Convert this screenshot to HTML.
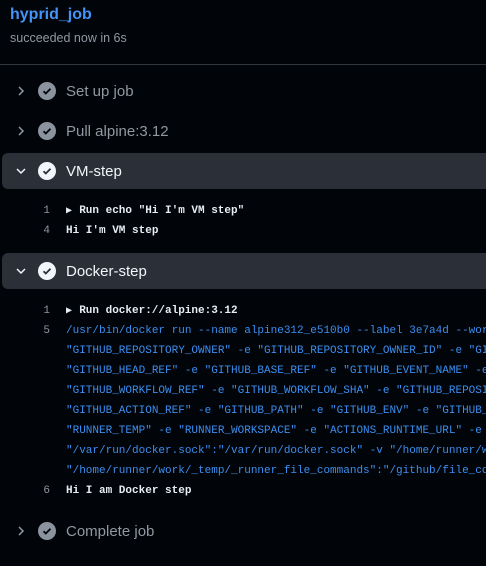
<!DOCTYPE html>
<html style="overflow:hidden"><head><meta charset="utf-8"><style>
body{margin:0;width:486px;height:566px;background:#010409;overflow:hidden;font-family:"Liberation Sans",sans-serif;position:relative}
.t{position:absolute;white-space:nowrap}
.title{left:10px;top:6px;font-size:16px;font-weight:bold;color:#4493f8}
.sub{left:10px;top:31px;font-size:12.5px;color:#9198a1}
.div{position:absolute;left:0;right:0;top:64px;height:1px;background:#30363d}
.step{position:absolute;left:2px;right:0;height:36px}
.step.open{background:#2b3038;border-radius:6px 0 0 6px}
.chev{position:absolute;left:13px;top:12px}
.chk{position:absolute;left:36px;top:9px;width:18px;height:18px;border-radius:50%;background:#8b949e}
.open .chk{background:#f0f6fc}
.chk svg{position:absolute;left:3px;top:3px}
.lbl{position:absolute;left:64px;top:10px;font-size:15px;color:#9198a1}
.open .lbl{color:#f0f6fc}
.code{font-family:"Liberation Mono",monospace;font-size:11px;}
.ln{position:absolute;left:30px;width:20px;text-align:right;color:#9198a1}
.c{position:absolute;left:66px;right:0;overflow:hidden;color:#e6edf3;font-weight:bold}
.b{color:#3b8ff0;font-weight:normal}
.tri{display:inline-block;width:13.2px;font-size:10px;}
</style></head><body>
<div class="t title">hyprid_job</div>
<div class="t sub">succeeded now in 6s</div>
<div class="div"></div>

<div class="step" style="top:73px"><svg class="chev" width="12" height="12" viewBox="0 0 12 12"><path d="M4 2l4 4-4 4" stroke="#9198a1" stroke-width="1.5" fill="none"/></svg><div class="chk"><svg width="12" height="12" viewBox="0 0 12 12"><path d="M2.5 6.2l2.3 2.3 4.7-4.8" stroke="#010409" stroke-width="1.8" fill="none"/></svg></div><div class="lbl">Set up job</div></div>
<div class="step" style="top:113px"><svg class="chev" width="12" height="12" viewBox="0 0 12 12"><path d="M4 2l4 4-4 4" stroke="#9198a1" stroke-width="1.5" fill="none"/></svg><div class="chk"><svg width="12" height="12" viewBox="0 0 12 12"><path d="M2.5 6.2l2.3 2.3 4.7-4.8" stroke="#010409" stroke-width="1.8" fill="none"/></svg></div><div class="lbl">Pull alpine:3.12</div></div>
<div class="step open" style="top:153px"><svg class="chev" width="12" height="12" viewBox="0 0 12 12"><path d="M2 4l4 4 4-4" stroke="#f0f6fc" stroke-width="1.5" fill="none"/></svg><div class="chk"><svg width="12" height="12" viewBox="0 0 12 12"><path d="M2.5 6.2l2.3 2.3 4.7-4.8" stroke="#2b3038" stroke-width="1.8" fill="none"/></svg></div><div class="lbl">VM-step</div></div>

<div class="code">
<div class="t ln" style="top:205px">1</div><div class="t c" style="top:205px"><span class="tri">▶</span>Run echo "Hi I'm VM step"</div>
<div class="t ln" style="top:225px">4</div><div class="t c" style="top:225px">Hi I'm VM step</div>
</div>

<div class="step open" style="top:253px"><svg class="chev" width="12" height="12" viewBox="0 0 12 12"><path d="M2 4l4 4 4-4" stroke="#f0f6fc" stroke-width="1.5" fill="none"/></svg><div class="chk"><svg width="12" height="12" viewBox="0 0 12 12"><path d="M2.5 6.2l2.3 2.3 4.7-4.8" stroke="#2b3038" stroke-width="1.8" fill="none"/></svg></div><div class="lbl">Docker-step</div></div>

<div class="code">
<div class="t ln" style="top:305px">1</div><div class="t c" style="top:305px"><span class="tri">▶</span>Run docker://alpine:3.12</div>
<div class="t ln" style="top:325px">5</div><div class="t c b" style="top:325px">/usr/bin/docker run --name alpine312_e510b0 --label 3e7a4d --workdir</div>
<div class="t c b" style="top:345px">"GITHUB_REPOSITORY_OWNER" -e "GITHUB_REPOSITORY_OWNER_ID" -e "GITHUB_</div>
<div class="t c b" style="top:365px">"GITHUB_HEAD_REF" -e "GITHUB_BASE_REF" -e "GITHUB_EVENT_NAME" -e "GI</div>
<div class="t c b" style="top:385px">"GITHUB_WORKFLOW_REF" -e "GITHUB_WORKFLOW_SHA" -e "GITHUB_REPOSITORY</div>
<div class="t c b" style="top:405px">"GITHUB_ACTION_REF" -e "GITHUB_PATH" -e "GITHUB_ENV" -e "GITHUB_STEP</div>
<div class="t c b" style="top:425px">"RUNNER_TEMP" -e "RUNNER_WORKSPACE" -e "ACTIONS_RUNTIME_URL" -e "ACT</div>
<div class="t c b" style="top:445px">"/var/run/docker.sock":"/var/run/docker.sock" -v "/home/runner/work/</div>
<div class="t c b" style="top:465px">"/home/runner/work/_temp/_runner_file_commands":"/github/file_comman</div>
<div class="t ln" style="top:485px">6</div><div class="t c" style="top:485px">Hi I am Docker step</div>
</div>

<div class="step" style="top:513px"><svg class="chev" width="12" height="12" viewBox="0 0 12 12"><path d="M4 2l4 4-4 4" stroke="#9198a1" stroke-width="1.5" fill="none"/></svg><div class="chk"><svg width="12" height="12" viewBox="0 0 12 12"><path d="M2.5 6.2l2.3 2.3 4.7-4.8" stroke="#010409" stroke-width="1.8" fill="none"/></svg></div><div class="lbl">Complete job</div></div>
</body></html>
